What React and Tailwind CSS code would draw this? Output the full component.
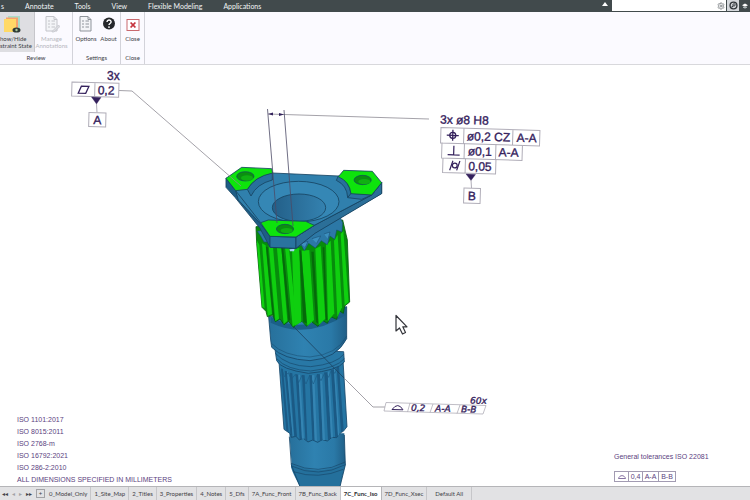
import React from "react";
import { Settings } from "lucide-react";

const MENU = ["Annotate", "Tools", "View", "Flexible Modeling", "Applications"];

const STATES = [
  "0_Model_Only",
  "1_Site_Map",
  "2_Titles",
  "3_Properties",
  "4_Notes",
  "5_Dfs",
  "7A_Func_Front",
  "7B_Func_Back",
  "7C_Func_Iso",
  "7D_Func_Xsec",
  "Default All",
];

const NOTES = [
  "ISO 1101:2017",
  "ISO 8015:2011",
  "ISO 2768-m",
  "ISO 16792:2021",
  "ISO 286-2:2010",
  "ALL DIMENSIONS SPECIFIED IN MILLIMETERS",
];

function MenuBar() {
  return (
    <header className="flex h-3 shrink-0 items-center justify-between bg-[#414a4c] text-[7px] leading-3 text-[#f1f4f5]">
      <nav className="flex gap-[21px] pl-[1px]">
        <button type="button">s</button>
        {MENU.map((m) => (
          <button key={m} type="button" className="whitespace-nowrap">
            {m}
          </button>
        ))}
      </nav>
      <div className="flex h-full items-center">
        <button type="button" aria-label="Collapse ribbon" className="mr-1">
          <svg viewBox="0 0 6 4" className="mb-1 h-1 w-[6px]">
            <path d="M0 4L3 0L6 4Z" fill="#fff" />
          </svg>
        </button>
        <div className="flex h-[11px] w-[114px] items-center self-start bg-white">
          <input aria-label="Search commands" className="h-full w-full min-w-0 bg-white px-1 text-black outline-none" />
          <Settings className="mr-[1px] h-2 w-2 shrink-0 text-[#8b8f92]" strokeWidth={3} />
        </div>
        <button type="button" aria-label="Search" className="ml-[1px] flex h-[11px] w-3 items-center justify-center self-start bg-[#d5d8dc]">
          <svg viewBox="0 0 10 10" className="h-[9px] w-[9px]" fill="none">
            <circle cx="5" cy="5" r="3.8" stroke="#30363a" strokeWidth="1.5" />
            <circle cx="5.6" cy="4.3" r="1.3" stroke="#30363a" strokeWidth="1" />
            <path d="M4.6 5.3L2.8 7.2" stroke="#30363a" strokeWidth="1.2" />
          </svg>
        </button>
        <button type="button" aria-label="Learning" className="ml-[3px] mr-[2px]">
          <svg viewBox="0 0 7 6" className="h-[6px] w-[6px]">
            <path d="M0 2.2L3.5 0L7 2.2L3.5 4Z" fill="#fff" />
            <path d="M1.4 3.6V5L3.5 6L5.6 5V3.6L3.5 4.8Z" fill="#cfd8da" />
          </svg>
        </button>
      </div>
    </header>
  );
}

function SheetIcon({ faded }) {
  const line = faded ? "#c3c4ca" : "#8f949b";
  return (
    <svg viewBox="0 0 16 18" className="h-[18px] w-4" fill="none">
      <path d="M2 1.5H10L13 4.5V16H2Z" fill="#f3f4f7" stroke={line} />
      <path d="M10 1.5V4.5H13" stroke={line} />
      <path d="M4 6H6M4 9H6M4 12H6" stroke={line} strokeWidth="1.2" />
      <path d="M7.5 6H11M7.5 9H11M7.5 12H11" stroke={line} strokeWidth="1.2" />
      {faded && <path d="M8 16.5L14.5 10L16 11.5L10 17H8Z" fill="#dcdde2" stroke={line} strokeWidth=".7" />}
    </svg>
  );
}

function RibbonGroup({ title, className, children }) {
  return (
    <section className={`flex flex-col justify-between border-r border-[#d3d3da] ${className}`}>
      <div className="flex justify-between">{children}</div>
      <h2 className="pb-[2px] text-center leading-2">{title}</h2>
    </section>
  );
}

function Ribbon() {
  return (
    <div className="flex h-[53px] shrink-0 border-b border-[#d8d8dc] bg-[#fbfaff] text-[6px] leading-[7px] text-[#3d4147]">
      <RibbonGroup title="Review" className="w-[73px] pl-0">
        <button type="button" className="flex h-10 w-[35px] flex-col items-start gap-[2px] border-r border-[#c6c6cb] bg-[#dedee2] pt-[3px] text-left whitespace-nowrap">
          <svg viewBox="0 0 18 18" className="ml-[3px] h-[18px] w-[18px]">
            <path d="M5 1H17V14H5Z" fill="#a9dcc9" />
            <path d="M3 2.5H15V15H3Z" fill="#f6a26d" />
            <path d="M1 4H13V15L11 17H1Z" fill="#ffd966" />
            <ellipse cx="13.5" cy="15" rx="4" ry="2.6" fill="#2f3a35" />
            <circle cx="13.5" cy="15" r="1.2" fill="#a7c79c" />
          </svg>
          <span>
            how/Hide
            <br />
            straint State
          </span>
        </button>
        <button type="button" disabled className="flex h-10 w-[37px] flex-col items-center gap-[2px] pt-[3px] pr-1 text-[#b5b6bc]">
          <SheetIcon faded />
          <span>
            Manage
            <br />
            Annotations
          </span>
        </button>
      </RibbonGroup>
      <RibbonGroup title="Settings" className="w-12">
        <button type="button" className="flex w-[26px] flex-col items-center gap-[2px] pt-[3px]">
          <SheetIcon />
          <span>Options</span>
        </button>
        <button type="button" className="flex w-[21px] flex-col items-center gap-[2px] pt-[3px] pr-[2px]">
          <svg viewBox="0 0 14 18" className="h-[18px] w-[14px]" fill="none">
            <circle cx="7" cy="8.5" r="6" fill="#26282b" />
            <path d="M5 7.1C5 4.300 9.2 4.500 9.1 7C9 8.500 7 8.500 7 10.1" stroke="#fff" strokeWidth="1.4" />
            <circle cx="7" cy="12.1" r=".9" fill="#fff" />
          </svg>
          <span>About</span>
        </button>
      </RibbonGroup>
      <RibbonGroup title="Close" className="w-6">
        <button type="button" className="flex w-full flex-col items-center gap-[2px] pt-[3px]">
          <svg viewBox="0 0 14 18" className="h-[18px] w-[14px]" fill="none">
            <rect x="1" y="4.500" width="12" height="11" fill="#fff" stroke="#c9696f" />
            <path d="M4.6 7.500L9.4 12.500M9.4 7.500L4.6 12.500" stroke="#c5343d" strokeWidth="1.8" />
          </svg>
          <span>Close</span>
        </button>
      </RibbonGroup>
    </div>
  );
}

/* Splined shaft with a three-lobed flange, drawn in 1/3 px units. */
function Shaft() {
  return (
    <g strokeLinejoin="round">
      <g transform="translate(250 340) scale(.33333)" stroke="#17476a" strokeWidth="2.5">
        <path d="M118 280L125 375L150 440H270L286 375L283 280Z" fill="url(#steel)" stroke="none" />
        <path d="M123 372Q205 410 286 370L285 378Q272 410 270 440H150Q128 400 123 382Z" fill="#24709c" stroke="none" />
        <path d="M118 290L124 375L150 440M283 285L286 375L270 440" fill="none" />
        <path d="M123 370Q205 408 286 366M124 378Q205 416 286 374M130 395Q205 420 280 388" fill="none" strokeWidth="2" />
        <path d="M87 65L102 268L122 282L124 292L138 289L148 300L160 295L174 306L188 300L203 307L217 299L232 303L246 292L260 293L272 278L280 274L291 260L279 60Z" fill="#2575a3" />
        <g stroke="none" fill="#1b5a85">
          <path d="M93 85L99 88L116 278L109 272Z" />
          <path d="M104 92L111 94L128 288L121 283Z" />
          <path d="M119 98L127 100L141 290L133 290Z" />
          <path d="M137 102L145 104L156 296L149 299Z" />
          <path d="M156 105L164 106L172 303L166 298Z" />
          <path d="M178 105L186 106L194 301L187 301Z" />
          <path d="M201 102L210 103L218 300L210 303Z" />
          <path d="M223 98L233 96L243 293L234 301Z" />
          <path d="M243 91L252 88L264 288L256 293Z" />
          <path d="M260 82L267 78L281 270L273 277Z" />
        </g>
        <g stroke="none" fill="#3585b3">
          <path d="M111 94L115 95L131 288L128 288Z" />
          <path d="M145 104L150 104L162 296L156 296Z" />
          <path d="M186 106L193 105L201 304L194 301Z" />
          <path d="M210 103L216 102L225 300L218 300Z" />
          <path d="M233 96L238 94L249 292L243 293Z" />
          <path d="M252 88L256 86L268 284L264 288Z" />
        </g>
        <path d="M96 92L104 110L115 98L124 118L136 103L146 128L156 106L168 132L179 106L190 132L202 103L213 122L225 97L236 112L244 90L255 100L262 80" fill="none" stroke="#1b5a85" strokeWidth="2" />
        <path d="M75 28L80 62Q92 88 175 100Q262 92 283 66L281 35Z" fill="#2878a6" />
        <path d="M76 40Q110 78 182 80Q260 72 282 42M80 56Q110 90 182 93Q260 84 283 56" fill="none" strokeWidth="2" />
        <path d="M56 -70L62 0L65 22Q100 58 180 62Q260 56 290 -4V-100Z" fill="url(#steel)" />
        <path d="M64 10Q100 48 180 51Q262 44 290 -12" fill="none" strokeWidth="1.5" />
      </g>

      <g transform="translate(240 220) scale(.33333)">
        <path d="M92 290Q190 350 318 262V285Q200 360 92 308Z" fill="#1b5f88" />
        <path
          d="M48 20L50 70L66 262L78 274L82 290L98 285L106 305L120 297L132 314L146 304L160 322L176 308L186 304L200 319L214 305L234 319L246 300L262 310L272 290L290 298L297 272L310 280L314 258L329 246L322 60L308 0Z"
          fill="#078c0c"
          stroke="#065d0c"
          strokeWidth="2.5"
        />
        <g fill="#0fcf0f">
          <path d="M50 60L58 75L74 265L66 260Z" />
          <path d="M66 70L77 76L96 282L83 288Z" />
          <path d="M86 75L99 80L117 296L106 304Z" />
          <path d="M110 75L124 80L142 303L131 313Z" />
          <path d="M135 80L147 84L170 308L158 320Z" />
          <path d="M156 88L178 84L184 306L164 318Z" />
          <path d="M184 92L208 90L222 300L202 318Z" />
          <path d="M226 86L242 78L256 296L236 316Z" />
          <path d="M258 74L272 62L283 280L264 304Z" />
          <path d="M282 62L293 45L306 262L292 292Z" />
          <path d="M302 42L310 32L326 246L314 256Z" />
        </g>
        <g fill="#05690a">
          <path d="M78 80L83 82L103 290L98 285Z" />
          <path d="M124 84L130 84L151 300L145 304Z" />
          <path d="M178 90L184 92L200 310L190 306Z" />
          <path d="M214 95L221 95L235 312L228 306Z" />
          <path d="M248 82L253 82L262 300L257 300Z" />
        </g>
        <g fill="#2c78a6" stroke="#17476a" strokeWidth="1.5">
          <path d="M52 34L62 48L72 66L84 66L96 80L108 72L124 82L140 80L160 88L184 76L193 92L206 70L226 84L244 62L262 74L270 48L284 58L290 30L306 36L308 8L300 -10Z" />
        </g>
        <path d="M148 88L164 86L162 94L150 94Z" fill="#a4d4f2" />
        <path d="M180 70L204 64L196 82M216 56L242 48L230 70M252 42L270 36L264 58" fill="#3c8fbf" stroke="#17476a" strokeWidth="1.5" />
      </g>

      <g transform="translate(215 100) scale(.33333)" stroke="#174362" strokeWidth="2.5">
        <path d="M33 235V262L60 292L135 385L165 442L243 445L300 398L500 280V248L470 240L62 240Z" fill="#1f5d85" />
        <path d="M165 409V442L243 445V411Z" fill="#2a739f" />
        <path d="M243 411V445L300 400L500 281V248L470 285L298 376Z" fill="#2b6f98" />
        <path d="M33 235L62 272L70 300L137 372L165 409L243 411L298 376L470 285L500 248L370 228L172 219Z" fill="#3080ad" />
        <path d="M62 272L137 368" fill="none" />
        <ellipse cx="251" cy="305" rx="121" ry="61" fill="#3587b5" />
        <ellipse cx="252" cy="323" rx="80" ry="41" fill="url(#bore)" />
        <path d="M97 268Q118 230 172 218V240Q125 252 108 288Z" fill="#28709c" />
        <path d="M370 228Q404 245 408 282L398 292Q396 256 364 241Z" fill="#28709c" />
        <path d="M408 280L470 285L440 298L398 293Z" fill="#2a739f" />
        <path d="M33 235L80 202L170 206L173 219Q118 230 97 268L62 272Z" fill="#0ee30c" />
        <path d="M370 230L386 211L472 214L500 248L470 285L408 281Q404 245 370 230Z" fill="#0ee30c" />
        <path d="M137 368L160 360L272 364L298 376L243 411L165 409Z" fill="#0ee30c" />
        <g fill="#0a8f10" strokeWidth="2">
          <ellipse cx="91" cy="229" rx="26" ry="14" />
          <ellipse cx="443" cy="240" rx="26" ry="14" />
          <ellipse cx="210" cy="387" rx="26" ry="14" />
        </g>
        <g fill="#10b012" stroke="none">
          <ellipse cx="96" cy="234" rx="18" ry="8" />
          <ellipse cx="448" cy="245" rx="18" ry="8" />
          <ellipse cx="215" cy="392" rx="18" ry="8" />
        </g>
      </g>
    </g>
  );
}

function Leaders() {
  return (
    <g fill="none" stroke="#8d8a93" strokeWidth=".8">
      <path d="M119 90.500L132 91L241 186" />
      <path d="M268 114L429 119" />
      <path d="M267.500 109L277 223M284 110L293 226" stroke="#4b4a66" />
      <path d="M294 327L344 378" stroke="#1c4160" />
      <path d="M344 378L373 407H385" />
      <path d="M268 114L273 112.500V115.500ZM284 114.500L279 113V116Z" fill="#33235c" stroke="none" />
    </g>
  );
}

const FRAME = "#b0adb8";
const INK = "#34215c";

function Callouts() {
  return (
    <g fontFamily="'Liberation Sans', Arial, sans-serif" fontSize="12" fill={INK} stroke={INK} strokeWidth=".35">
      <text x="107" y="80">3x</text>
      <g transform="translate(72 82) rotate(1.500)">
        <path d="M0 0H47V14H0ZM23 0V14" fill="none" stroke={FRAME} strokeWidth="1" />
        <path d="M6.500 11L9.500 4H17L14 11Z" fill="none" strokeWidth="1.300" />
        <text x="26" y="11.500">0,2</text>
      </g>
      <path d="M91.500 97L101 97.500L96.500 104Z" />
      <path d="M96.500 104L97 112.500" stroke={FRAME} strokeWidth="1" />
      <g transform="translate(89 112.500) rotate(1.500)">
        <path d="M0 0H17V14H0Z" fill="none" stroke={FRAME} strokeWidth="1" />
        <text x="4.500" y="11.500">A</text>
      </g>

      <text transform="translate(440 123.500) rotate(1.500)">3x ø8 H8</text>
      <g transform="translate(441 127.500) rotate(1.700)">
        <path d="M0 0H99V15.500H0ZM23 0V15.500M72 0V15.500" fill="none" stroke={FRAME} strokeWidth="1" />
        <circle cx="12" cy="7.500" r="3" fill="none" strokeWidth="1.300" />
        <path d="M6 7.500H18M12 2V13" strokeWidth="1.300" />
        <text x="26" y="12">ø0,2 CZ</text>
        <text x="76" y="12">A-A</text>
      </g>
      <g transform="translate(442 142.500) rotate(1.700)">
        <path d="M0 0V15.500H80.500V1M22.500 0V15.500M54 0V15.500" fill="none" stroke={FRAME} strokeWidth="1" />
        <path d="M6 12H18M12 3V12" strokeWidth="1.200" />
        <text x="26" y="12">ø0,1</text>
        <text x="57" y="12">A-A</text>
      </g>
      <g transform="translate(443 158) rotate(1.700)">
        <path d="M0 0V14.500H53V0M22.500 0V14.500" fill="none" stroke={FRAME} strokeWidth="1" />
        <path d="M7 12L10 2.500M14 12L17 2.500" strokeWidth="1.200" />
        <circle cx="12" cy="7.200" r="2.400" fill="none" strokeWidth="1.200" />
        <text x="25.500" y="11.500">0,05</text>
      </g>
      <path d="M466 174L475.500 174.500L471 180.500Z" />
      <path d="M471 180L471.500 188" stroke={FRAME} strokeWidth="1" />
      <g transform="translate(464 188) rotate(1.700)">
        <path d="M0 0H16.500V15H0Z" fill="none" stroke={FRAME} strokeWidth="1" />
        <text x="4" y="12">B</text>
      </g>

      <path d="M386 402.500L486 405.500L483 414L384 411ZM410 403L407.500 412M433 404L430 412.500M460 405L457 413.500" fill="none" stroke={FRAME} strokeWidth=".8" />
      <path d="M392 409.500Q398 401.500 403 409.800Z" fill="none" strokeWidth="1" />
      <g fontFamily="'DejaVu Sans', sans-serif" fontSize="9" fontStyle="italic" strokeWidth=".35">
        <text transform="translate(411 410.800) rotate(1.500)">0,2</text>
        <text transform="translate(435 411.500) rotate(1.500)">A-A</text>
        <text transform="translate(461 412.200) rotate(1.500)">B-B</text>
        <text transform="translate(470 403.500) rotate(1.500)">60x</text>
      </g>
    </g>
  );
}

function ModelView() {
  return (
    <main className="relative min-h-0 flex-1 overflow-hidden bg-white">
      <svg viewBox="0 65 750 421" className="h-full w-full" role="img" aria-label="Splined shaft with tolerance annotations">
        <defs>
          <linearGradient id="steel">
            <stop offset="0" stopColor="#27709b" />
            <stop offset=".45" stopColor="#2f82b1" />
            <stop offset=".8" stopColor="#2a79a7" />
            <stop offset="1" stopColor="#205f87" />
          </linearGradient>
          <linearGradient id="bore">
            <stop offset="0" stopColor="#235f88" />
            <stop offset="1" stopColor="#3482b0" />
          </linearGradient>
        </defs>
        <Shaft />
        <Leaders />
        <Callouts />
        <path d="M396 315.500V331L399.500 328L402.500 334L405.500 332.500L402.800 326.800H407Z" fill="#fff" stroke="#33343a" strokeWidth="1.200" strokeLinejoin="round" />
      </svg>
      <ul className="absolute bottom-0 left-[17px] font-['Liberation_Sans',Arial,sans-serif] text-[7px] leading-3 text-[#5b4280]">
        {NOTES.map((n) => (
          <li key={n}>{n}</li>
        ))}
      </ul>
      <div className="absolute right-9 bottom-1 w-[100px] font-['Liberation_Sans',Arial,sans-serif] text-[7px] text-[#5b4280]">
        <p className="mb-2 leading-3 whitespace-nowrap">General tolerances ISO 22081</p>
        <div className="flex h-[11px] w-fit divide-x divide-[#a29bb2] border border-[#a29bb2] text-center leading-[10px]">
          <span className="flex w-[14px] items-center justify-center">
            <svg viewBox="0 0 8 4" className="h-1 w-2" fill="none">
              <path d="M.5 3.500C1.500-.3 6.500-.3 7.500 3.500Z" stroke="#69508c" strokeWidth=".8" />
            </svg>
          </span>
          <span className="w-[14px]">0,4</span>
          <span className="w-4">A-A</span>
          <span className="w-4">B-B</span>
        </div>
      </div>
    </main>
  );
}

function StateTabs() {
  return (
    <footer className="flex h-[14px] shrink-0 items-center border-t border-[#b5b5b8] bg-[#e2e2e4] text-[6px] leading-[10px] text-[#3f4146]">
      <div className="flex w-[46px] shrink-0 items-center justify-between pr-[1px] pl-[2px]">
        <button type="button" aria-label="First tab">◂◂</button>
        <button type="button" aria-label="Previous tab" className="text-[#a2a2a6]">◂</button>
        <button type="button" aria-label="Next tab" className="text-[#a2a2a6]">▸</button>
        <button type="button" aria-label="Last tab">▸▸</button>
        <button type="button" aria-label="Add tab" className="h-[9px] w-[9px] border border-[#a2a2a6] leading-[7px]">+</button>
      </div>
      <div className="flex h-full items-stretch">
        {STATES.map((s) => (
          <button
            key={s}
            type="button"
            className={
              s === "7C_Func_Iso"
                ? "border-r border-[#b5b5b8] bg-white px-[3px] font-bold whitespace-nowrap text-[#2c2d31]"
                : "border-r border-[#c6c6c9] px-[3px] whitespace-nowrap last:px-2"
            }
          >
            {s}
          </button>
        ))}
      </div>
    </footer>
  );
}

export default function App() {
  return (
    <div className="flex h-screen flex-col overflow-hidden bg-white font-[Lato,'Open_Sans',sans-serif]">
      <MenuBar />
      <Ribbon />
      <ModelView />
      <StateTabs />
    </div>
  );
}
